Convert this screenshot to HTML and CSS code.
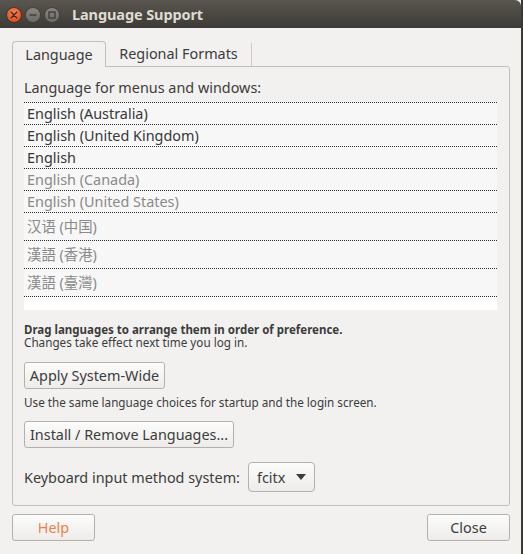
FILE: index.html
```html
<!DOCTYPE html>
<html>
<head>
<meta charset="utf-8">
<link rel="stylesheet" href="styles.css">
</head>
<body>
<div class="window">
  <div class="titlebar">
    <svg class="wm-buttons" width="62" height="20" viewBox="0 0 62 20">
      <defs>
        <radialGradient id="cg" cx="50%" cy="35%" r="65%">
          <stop offset="0" stop-color="#f7845a"/>
          <stop offset="1" stop-color="#df4a16"/>
        </radialGradient>
        <linearGradient id="gg" x1="0" y1="0" x2="0" y2="1">
          <stop offset="0" stop-color="#8a8782"/>
          <stop offset="1" stop-color="#6b6964"/>
        </linearGradient>
      </defs>
      <circle cx="14" cy="10" r="7.5" fill="url(#cg)" stroke="#3a2a20" stroke-width="0.8"/>
      <path d="M11.3 7.3 L16.7 12.7 M16.7 7.3 L11.3 12.7" stroke="#3b2b22" stroke-width="1.4" stroke-linecap="round"/>
      <circle cx="33" cy="10" r="7.5" fill="url(#gg)" stroke="#3a3935" stroke-width="0.8"/>
      <path d="M29.5 10 H36.5" stroke="#3c3b37" stroke-width="1.4"/>
      <circle cx="52" cy="10" r="7.5" fill="url(#gg)" stroke="#3a3935" stroke-width="0.8"/>
      <rect x="49" y="7" width="6" height="6" fill="none" stroke="#3c3b37" stroke-width="1.3"/>
    </svg>
    <span class="title">Language Support</span>
  </div>
  <div class="content">
    <div class="tabs">
      <div class="tab active">Language</div>
      <div class="tab">Regional Formats</div>
    </div>
    <div class="frame">
      <div class="label">Language for menus and windows:</div>
      <div class="list">
        <div class="row">English (Australia)</div>
        <div class="row">English (United Kingdom)</div>
        <div class="row">English</div>
        <div class="row dim">English (Canada)</div>
        <div class="row dim">English (United States)</div>
        <div class="row dim cjk">汉语 (中国)</div>
        <div class="row dim cjk">漢語 (香港)</div>
        <div class="row dim cjk">漢語 (臺灣)</div>
        <div class="tail"></div>
      </div>
      <p class="note first"><b>Drag languages to arrange them in order of preference.</b></p>
      <p class="note">Changes take effect next time you log in.</p>
      <button class="btn apply">Apply System-Wide</button>
      <p class="note second">Use the same language choices for startup and the login screen.</p>
      <button class="btn install">Install / Remove Languages...</button>
      <div class="kbd-row">
        <span class="kbd-label">Keyboard input method system:</span>
        <div class="combo">fcitx
          <svg class="arrow" width="10" height="6" viewBox="0 0 10 6"><path d="M0 0 H10 L5 6 Z" fill="#3c3c3c"/></svg>
        </div>
      </div>
    </div>
    <div class="actions">
      <button class="btn bottom help">Help</button>
      <button class="btn bottom">Close</button>
    </div>
  </div>
</div>
</body>
</html>
```
FILE: styles.css
```css
html, body {
  margin: 0;
  padding: 0;
}
body {
  width: 523px;
  height: 554px;
  background: #3a3935;
  font-family: "Noto Sans", "Open Sans", "Noto Sans CJK SC", sans-serif;
  color: #3c3c3c;
  overflow: hidden;
  display: flex;
}
.window {
  width: 521px;
  height: 554px;
  background: #f2f1f0;
  display: flex;
  flex-direction: column;
}
.titlebar {
  height: 28px;
  background: linear-gradient(#5a564f, #3c3b37);
  border-top-right-radius: 6px;
  display: flex;
  align-items: center;
  box-sizing: border-box;
}
.wm-buttons {
  display: block;
  margin-top: 1px;
}
.title {
  margin-left: 10px;
  color: #dfdbd2;
  font-weight: bold;
  font-size: 14.5px;
  letter-spacing: -0.1px;
}
.content {
  padding: 13px 11px 0 12px;
  font-size: 14.4px;
}
.tabs {
  display: flex;
  height: 25px;
}
.tab {
  box-sizing: border-box;
  height: 25px;
  display: flex;
  align-items: center;
  justify-content: center;
}
.tab.active {
  width: 94px;
  height: 26px;
  border: 1px solid #c2bfba;
  border-bottom: none;
  border-radius: 4px 4px 0 0;
  background: #f2f1f0;
  position: relative;
  z-index: 1;
  padding-bottom: 1px;
}
.tab:not(.active) {
  width: 146px;
  margin-top: 2px;
  height: 23px;
  border-right: 1px solid #cfccc7;
  padding-bottom: 2px;
}
.frame {
  border: 1px solid #c2bfba;
  border-radius: 0 3px 3px 3px;
  padding: 11px 11px 13px 11px;
  display: flex;
  flex-direction: column;
  align-items: flex-start;
}
.label {
  line-height: 20px;
}
.list {
  margin-top: 4px;
  width: 473px;
  background: #f7f7f7;
  border-top: 1px dotted #2e2e2e;
}
.row {
  height: 21px;
  line-height: 21px;
  padding-left: 3px;
  border-bottom: 1px dotted #2e2e2e;
  color: #363636;
}
.row.dim {
  color: #8a8a8a;
}
.row.cjk {
  height: 27px;
  line-height: 27px;
}
.tail {
  height: 13px;
  background: #ffffff;
}
.note {
  margin: 0;
  font-size: 11.7px;
  line-height: 13px;
}
.note b {
  font-weight: bold;
  font-size: 11.5px;
}
.note.first {
  margin-top: 13px;
}
.note.second {
  margin-top: 7px;
}
.btn {
  font-family: inherit;
  font-size: 14.4px;
  color: #3c3c3c;
  background: linear-gradient(#fcfcfb, #edecea);
  border: 1px solid #b4b1ac;
  border-radius: 3px;
  height: 27px;
  padding: 0;
  box-sizing: border-box;
  box-shadow: inset 0 1px 0 #ffffff;
}
.apply {
  width: 141px;
  margin-top: 13px;
}
.install {
  width: 210px;
  margin-top: 12px;
}
.kbd-row {
  margin-top: 14px;
  display: flex;
  align-items: center;
}
.combo {
  margin-left: 8px;
  width: 67px;
  height: 30px;
  box-sizing: border-box;
  border: 1px solid #b4b1ac;
  border-radius: 4px;
  background: linear-gradient(#fcfcfb, #edecea);
  display: flex;
  align-items: center;
  padding-left: 8px;
}
.arrow {
  margin-left: 11px;
}
.actions {
  margin-top: 8px;
  display: flex;
  justify-content: space-between;
}
.bottom {
  width: 83px;
}
.help {
  color: #f0804c;
}
```
